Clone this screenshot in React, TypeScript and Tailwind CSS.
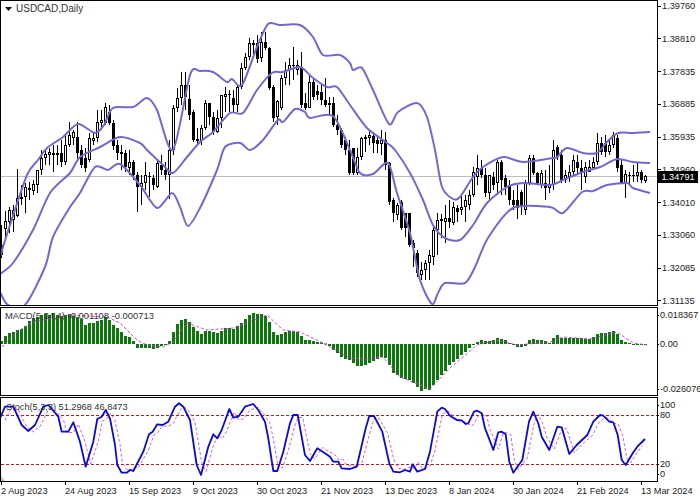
const candles: [number, number, number, number, number][] = [
[245,255,225,258,1],[221,229,211,240,0],[210,222,207,233,0],[210,220,205,232,0],[198,216,169,217,0],[197,198,185,205,0],[187,197,183,213,0],[188,190,182,200,1],[184,191,180,195,0],[170,185,170,193,0],[158,170,150,175,0],[154,158,150,165,0],[152,155,148,165,0],[153,155,145,172,1],[153,155,145,165,1],[153,162,140,167,1],[145,162,135,165,0],[135,145,122,147,0],[132,138,130,145,0],[137,153,122,160,1],[150,165,145,168,1],[158,168,148,172,1],[138,160,133,162,0],[138,141,132,145,0],[122,138,110,142,0],[120,123,110,130,0],[107,123,103,125,0],[112,123,105,125,1],[123,146,120,150,1],[145,153,140,160,1],[152,154,145,170,1],[153,167,150,172,1],[162,168,150,175,0],[162,175,160,180,1],[175,187,172,212,1],[183,187,175,205,0],[175,183,162,190,0],[176,177,172,197,1],[178,185,175,190,1],[163,187,160,188,0],[165,170,155,175,1],[170,175,162,180,1],[150,175,140,199,0],[108,150,105,155,0],[98,108,88,112,0],[85,98,72,105,0],[85,97,72,110,1],[99,115,85,120,1],[112,140,110,142,1],[139,141,128,145,1],[128,141,125,145,0],[103,128,100,130,0],[103,117,103,125,1],[117,132,112,135,1],[118,132,110,133,0],[95,118,95,128,0],[94,97,87,112,0],[94,95,90,112,1],[98,105,90,112,1],[87,105,85,112,0],[68,87,63,89,0],[57,68,53,70,0],[43,57,38,60,0],[43,45,40,55,0],[43,59,35,63,1],[42,58,32,62,0],[42,48,32,50,1],[48,88,47,90,1],[87,118,85,122,1],[101,117,100,125,0],[78,108,75,110,0],[70,78,62,85,0],[65,70,58,85,0],[65,66,47,80,1],[65,70,60,75,0],[67,105,52,108,1],[103,108,93,110,1],[82,108,75,108,0],[82,97,78,100,1],[91,95,85,100,1],[92,100,85,105,1],[100,105,78,107,1],[103,105,97,115,0],[103,125,97,127,1],[125,130,115,135,1],[130,145,128,148,1],[140,150,137,155,1],[150,173,140,175,1],[148,173,148,175,1],[157,173,148,175,0],[138,157,137,160,0],[137,139,135,152,0],[135,138,131,145,0],[136,143,134,153,1],[140,144,135,153,1],[140,144,130,155,0],[140,165,132,170,1],[163,202,162,205,1],[200,213,198,222,1],[205,215,203,220,0],[202,228,200,230,1],[213,228,213,237,1],[213,245,213,247,1],[243,248,240,267,1],[253,273,250,277,1],[270,275,262,280,0],[263,270,260,280,0],[255,263,250,280,0],[230,257,226,265,0],[220,230,213,255,0],[219,221,214,238,0],[218,222,205,243,0],[218,222,200,228,1],[207,223,202,225,0],[208,212,205,222,1],[207,210,195,215,0],[200,207,195,222,0],[195,205,190,210,0],[172,195,167,197,0],[168,177,155,185,0],[168,175,160,178,1],[175,193,168,197,1],[175,193,175,200,0],[177,185,172,190,1],[162,183,160,195,0],[162,180,160,195,1],[178,187,175,195,1],[185,200,180,205,1],[200,205,190,210,1],[200,208,185,219,1],[192,207,190,215,1],[183,210,180,215,0],[158,183,155,185,0],[158,173,155,175,1],[173,183,172,185,1],[173,185,170,188,0],[183,188,170,200,1],[185,188,165,193,0],[150,185,140,190,0],[147,157,145,160,1],[155,180,150,183,1],[175,180,170,183,0],[172,177,165,182,0],[160,172,155,175,0],[162,168,155,175,1],[168,172,160,190,1],[167,177,162,183,0],[167,172,160,172,0],[162,168,157,170,0],[143,162,133,165,0],[143,152,137,155,1],[143,152,135,157,1],[145,152,140,155,0],[135,145,132,148,0],[138,168,135,172,1],[165,183,160,183,1],[174,183,170,198,0],[175,176,172,185,1],[175,176,165,182,1],[172,176,162,182,0],[172,180,170,183,1],[176,181,175,183,0],
];

const macd = [3,8,11,12,14,15,18,23,26,27,29,30,29,31,29,28,29,30,28,27,25,19,21,21,23,24,27,24,19,16,12,8,7,3,-4,-4,-4,-4,-5,-4,-2,-1,3,12,20,24,25,22,17,13,10,13,13,12,11,13,16,16,15,18,21,25,29,31,30,30,28,22,12,9,10,12,13,13,12,8,4,4,3,2,1.5,0.5,-2,-6,-9,-13,-15,-16,-19,-22,-22,-21,-19,-17,-15,-13,-14,-21,-29,-31,-34,-35,-36,-39,-43,-47,-45,-46,-41,-36,-31,-27,-21,-18,-15,-11,-8,-4,-1,2,4,3,3,4,6,5,4,1,-1,-3,-3,-2,4,5,4,4,3,1,6,9,6,6,6,6,6,6,5,5,7,10,11,11,12,13,10,4,2,1,-1,-1,-1,-1];

const upper = "0,257 10,225 27,175 38,160 47,148 63,137 78,124 95,133 104,125 113,108 133,107 147,98 157,110 173,150 190,75 200,71 213,72 227,82 232,79 242,85 257,47 268,24 280,25 300,25 313,37 323,55 340,55 350,63 353,70 362,68 373,90 389,124 398,112 417,103 427,117 435,150 442,187 453,199 460,197 473,177 483,167 503,157 523,162 553,158 557,157 567,148 583,153 597,153 607,142 618,133 633,133 650,132";
const middle = "0,274 13,263 33,230 50,193 70,173 80,157 100,147 120,137 140,143 147,150 163,165 173,173 187,157 200,142 213,132 230,113 243,113 257,90 272,73 283,72 300,67 313,78 327,87 337,87 350,105 367,128 387,143 395,150 410,173 423,200 433,225 445,238 460,240 473,225 487,203 507,187 523,183 550,185 563,180 583,172 600,167 617,159 633,162 650,163";
const lower = "0,292 8,305 25,305 45,267 53,237 70,207 80,193 95,167 108,170 120,164 140,185 157,208 172,193 180,207 188,226 200,208 217,170 225,147 240,143 250,150 263,140 278,120 283,122 295,109 305,112 310,118 333,116 350,150 360,173 373,174 388,163 397,193 410,233 420,280 432,304 438,293 445,283 465,283 475,267 488,238 513,208 550,207 563,213 582,192 593,191 607,185 627,183 633,188 650,193";

function smooth(points: string): string {
  const p = points.split(" ").map((s) => s.split(",").map(Number));
  let d = `M${p[0][0]} ${p[0][1]}`;
  for (let i = 0; i < p.length - 1; i++) {
    const a = p[Math.max(i - 1, 0)];
    const b = p[i];
    const c = p[i + 1];
    const e = p[Math.min(i + 2, p.length - 1)];
    const k = 0.14;
    d += `C${(b[0] + (c[0] - a[0]) * k).toFixed(1)} ${(b[1] + (c[1] - a[1]) * k).toFixed(1)} ${(c[0] - (e[0] - b[0]) * k).toFixed(1)} ${(c[1] - (e[1] - b[1]) * k).toFixed(1)} ${c[0]} ${c[1]}`;
  }
  return d;
}

const signal = "2,347 17,332 33,322 67,315 107,317 120,323 137,340 147,345 163,347 173,342 187,323 207,330 233,328 267,315 283,330 300,332 323,343 350,358 370,359 383,357 400,377 430,389 450,368 477,345 497,340 517,345 550,342 563,337 590,339 617,332 633,343 647,345";

const stochA: [number, number][] = [[0,70],[15,35],[40,35],[65,90],[85,108],[105,90],[130,35],[145,30],[175,65],[185,110],[205,110],[220,82],[240,140],[257,215],[280,140],[292,72],[305,65],[317,45],[330,70],[345,150],[352,210],[365,233],[380,233],[390,225],[400,228],[430,170],[447,118],[458,110],[472,88],[488,90],[505,80],[525,35],[537,25],[550,35],[570,75],[590,210],[603,240],[625,155],[640,118],[652,130],[665,105],[688,42],[700,68],[715,65],[735,35],[760,27],[775,45],[795,80],[805,130],[820,228],[832,228],[850,170],[870,85],[880,60],[893,60],[915,180],[930,198],[952,160],[975,175],[990,185],[1000,200],[1015,200],[1025,220],[1050,222]];
const stochB: [number, number][] = [[20,215],[47,100],[58,63],[72,63],[97,110],[118,205],[130,230],[150,232],[165,225],[180,230],[188,208],[202,230],[225,222],[240,170],[262,50],[275,38],[285,42],[300,62],[320,75],[335,76],[347,87],[355,85],[372,50],[382,47],[395,55],[405,100],[415,125],[430,165],[445,112],[455,110],[467,118],[478,200],[490,233],[517,195],[537,80],[550,50],[565,85],[575,125],[598,165],[622,95],[635,97],[658,177],[680,150],[712,120],[730,80],[750,60],[760,62],[778,80],[790,82],[803,120],[815,195],[827,210],[850,172],[862,155],[885,132]];
const stochReal: [number, number][] = [
  ...stochA.map(([x, y]): [number, number] => [x / 3, 395 + y / 3]),
  ...stochB.map(([x, y]): [number, number] => [350 + x / 3, 395 + y / 3]),
];
const stochMain = stochReal.map(([x, y]) => `${x.toFixed(1)},${y.toFixed(1)}`).join(" ");
const stochSignal = stochReal
  .slice(0, -1)
  .map(([x, y]) => `${(x + 5).toFixed(1)},${(440 + (y - 440) * 0.9).toFixed(1)}`)
  .join(" ");

const priceLabels = ["1.39760", "1.38810", "1.37835", "1.36885", "1.35935", "1.34960", "1.34010", "1.33060", "1.32085", "1.31135"];
const dates = ["2 Aug 2023", "24 Aug 2023", "15 Sep 2023", "9 Oct 2023", "30 Oct 2023", "21 Nov 2023", "13 Dec 2023", "8 Jan 2024", "30 Jan 2024", "21 Feb 2024", "13 Mar 2024"];

function Tick({ label, className, long }: { label: string; className?: string; long?: boolean }) {
  return (
    <div className={`flex h-[10px] items-center ${className ?? ""}`}>
      <span className={`h-px shrink-0 bg-black ${long ? "mr-px w-[3px]" : "mr-px w-px"}`} />
      <span className="whitespace-nowrap">{label}</span>
    </div>
  );
}

export default function App() {
  return (
    <div className="h-[500px] w-[700px] overflow-hidden bg-white text-[9.2px] leading-[10px] text-[#1c1c1c] [font-family:'Liberation_Sans',Arial,sans-serif]">
      <div className="flex h-[306px]">
        <div className="relative h-[306px] w-[658px] border border-black">
          <svg width="656" height="304" viewBox="1 1 656 304" className="block">
            <line x1="1" x2="657" y1="176.5" y2="176.5" stroke="#bdbdbd" strokeWidth="1" />
            {candles.map(([top, bot, hi, lo, dark], i) => {
              const x = 1 + 4 * i;
              return (
                <g key={i}>
                  <line x1={x + 0.5} x2={x + 0.5} y1={hi} y2={lo} stroke="#000" strokeWidth="1" />
                  {dark ? (
                    <rect x={x - 1} y={top} width="3" height={Math.max(bot - top, 1)} fill="#000" />
                  ) : (
                    <rect x={x - 0.5} y={top + 0.5} width="2" height={Math.max(bot - top - 1, 1)} fill="#fff" stroke="#000" strokeWidth="1" />
                  )}
                </g>
              );
            })}
            <g fill="none" stroke="#7468cf" strokeWidth="2" strokeLinejoin="round">
              <path d={smooth(upper)} />
              <path d={smooth(middle)} />
              <path d={smooth(lower)} />
            </g>
          </svg>
          <div className="absolute left-[4px] top-[2px] flex items-center gap-[4px] text-[10px] leading-[12px] text-[#333]">
            <svg width="7" height="4" viewBox="0 0 7 4" className="block">
              <path d="M0 0h7L3.5 4z" fill="#111" />
            </svg>
            <span>USDCAD,Daily</span>
          </div>
          <div className="absolute left-[657px] top-[170px] z-10 flex h-[12px] w-[40px] items-center justify-center bg-black text-white">
            1.34791
          </div>
        </div>
        <div className="flex h-[306px] w-[42px] flex-col justify-between pt-px">
          {priceLabels.map((p) => (
            <Tick key={p} label={p} long />
          ))}
        </div>
      </div>

      <div className="mt-px flex h-[89px]">
        <div className="relative h-[89px] w-[658px] border border-black">
          <svg width="656" height="87" viewBox="1 308 656 87" className="block">
            {macd.map((v, i) => {
              const x = 1 + 4 * i;
              return <rect key={i} x={x - 1} y={v >= 0 ? 344 - v : 344} width="3" height={Math.max(Math.abs(v), 1)} fill="#0b7a0b" />;
            })}
            <polyline points={signal} fill="none" stroke="#c838c8" strokeWidth="0.9" strokeDasharray="3 2" />
          </svg>
          <div className="absolute left-[4px] top-[3px] whitespace-nowrap text-[9.4px] text-[#333]">MACD(5,34,4) -0.001108 -0.000713</div>
        </div>
        <div className="flex w-[42px] flex-col pt-[3px]">
          <Tick label="0.018367" />
          <Tick label="0.00" className="mt-[19px]" />
          <Tick label="-0.026076" className="mt-[35px]" />
        </div>
      </div>

      <div className="mt-px flex h-[85px]">
        <div className="relative h-[85px] w-[658px] border border-black">
          <svg width="656" height="83" viewBox="1 398 656 83" className="block">
            <line x1="1" x2="657" y1="415.5" y2="415.5" stroke="#b81c1c" strokeWidth="1" strokeDasharray="3 2" />
            <line x1="1" x2="657" y1="464.5" y2="464.5" stroke="#b81c1c" strokeWidth="1" strokeDasharray="3 2" />
            <polyline points={stochSignal} fill="none" stroke="#c838c8" strokeWidth="0.8" strokeDasharray="3 2" />
            <polyline points={stochMain} fill="none" stroke="#0a0ad0" strokeWidth="1.8" strokeLinejoin="round" />
            <path d="M1 476l4 5H1z" fill="#c4c4c4" />
          </svg>
          <div className="absolute left-[5px] top-[4px] whitespace-nowrap text-[9.2px] text-[#333]">Stoch(5,3,3) 51.2968 46.8473</div>
        </div>
        <div className="flex w-[42px] flex-col pt-[3px]">
          <Tick label="100" />
          <Tick label="80" />
          <Tick label="20" className="mt-[39px]" />
          <Tick label="0" />
        </div>
      </div>

      <div className="flex h-[18px]">
        {dates.map((d, i) => (
          <div key={d} className={`flex shrink-0 flex-col ${i === 0 ? "w-[65px] pl-px" : "w-[64px]"}`}>
            <span className="h-[3px] w-px bg-black" />
            <span className="mt-px whitespace-nowrap">{d}</span>
          </div>
        ))}
      </div>
    </div>
  );
}
